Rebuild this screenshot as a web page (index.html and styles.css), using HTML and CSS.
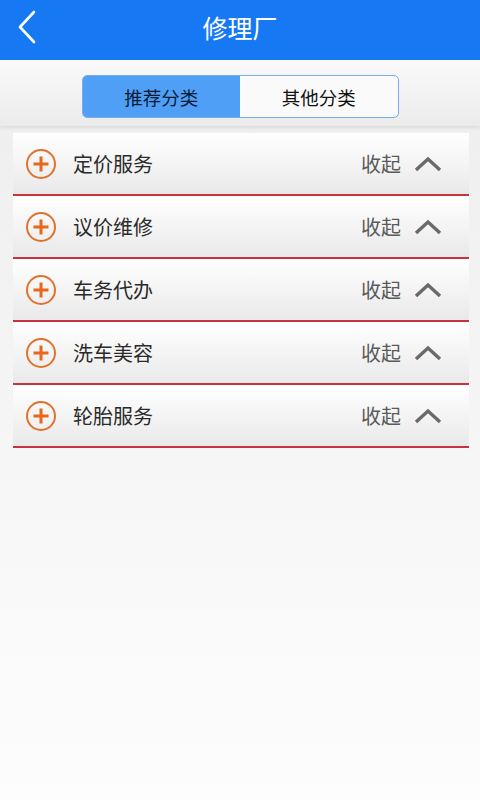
FILE: index.html
```html
<!DOCTYPE html>
<html lang="zh">
<head>
  <meta charset="UTF-8" />
  <meta name="viewport" content="width=device-width, initial-scale=1.0"/>
  <title>修理厂</title>
  <link rel="stylesheet" href="styles.css">
</head>
<body>
  <div class="top-bar">
    <div class="back-button">
      <svg width="22" height="34" viewBox="0 0 22 34">
        <path d="M18 2 L4 17 L18 32" fill="none" stroke="#fff" stroke-width="2.6" stroke-linecap="round" stroke-linejoin="round"/>
      </svg>
    </div>
    <div class="title">修理厂</div>
  </div>

  <div class="tab-area">
    <div class="tabs">
      <div class="tab active">推荐分类</div>
      <div class="tab">其他分类</div>
    </div>
  </div>

  <div class="category-list">
    <div class="category-row">
      <svg class="plus-icon" width="32" height="32" viewBox="0 0 32 32">
        <circle cx="16" cy="16" r="14" fill="none" stroke="#e2722b" stroke-width="2"/>
        <path d="M16 8.5 V23.5 M8.5 16 H23.5" stroke="#e8671a" stroke-width="3"/>
      </svg>
      <span class="category-name">定价服务</span>
      <span class="toggle-text">收起</span>
      <svg class="up-icon" width="30" height="18" viewBox="0 0 30 18">
        <path d="M3 15 L15 4 L27 15" fill="none" stroke="#6a6a6a" stroke-width="3.4"/>
      </svg>
    </div>
    <div class="category-row">
      <svg class="plus-icon" width="32" height="32" viewBox="0 0 32 32">
        <circle cx="16" cy="16" r="14" fill="none" stroke="#e2722b" stroke-width="2"/>
        <path d="M16 8.5 V23.5 M8.5 16 H23.5" stroke="#e8671a" stroke-width="3"/>
      </svg>
      <span class="category-name">议价维修</span>
      <span class="toggle-text">收起</span>
      <svg class="up-icon" width="30" height="18" viewBox="0 0 30 18">
        <path d="M3 15 L15 4 L27 15" fill="none" stroke="#6a6a6a" stroke-width="3.4"/>
      </svg>
    </div>
    <div class="category-row">
      <svg class="plus-icon" width="32" height="32" viewBox="0 0 32 32">
        <circle cx="16" cy="16" r="14" fill="none" stroke="#e2722b" stroke-width="2"/>
        <path d="M16 8.5 V23.5 M8.5 16 H23.5" stroke="#e8671a" stroke-width="3"/>
      </svg>
      <span class="category-name">车务代办</span>
      <span class="toggle-text">收起</span>
      <svg class="up-icon" width="30" height="18" viewBox="0 0 30 18">
        <path d="M3 15 L15 4 L27 15" fill="none" stroke="#6a6a6a" stroke-width="3.4"/>
      </svg>
    </div>
    <div class="category-row">
      <svg class="plus-icon" width="32" height="32" viewBox="0 0 32 32">
        <circle cx="16" cy="16" r="14" fill="none" stroke="#e2722b" stroke-width="2"/>
        <path d="M16 8.5 V23.5 M8.5 16 H23.5" stroke="#e8671a" stroke-width="3"/>
      </svg>
      <span class="category-name">洗车美容</span>
      <span class="toggle-text">收起</span>
      <svg class="up-icon" width="30" height="18" viewBox="0 0 30 18">
        <path d="M3 15 L15 4 L27 15" fill="none" stroke="#6a6a6a" stroke-width="3.4"/>
      </svg>
    </div>
    <div class="category-row">
      <svg class="plus-icon" width="32" height="32" viewBox="0 0 32 32">
        <circle cx="16" cy="16" r="14" fill="none" stroke="#e2722b" stroke-width="2"/>
        <path d="M16 8.5 V23.5 M8.5 16 H23.5" stroke="#e8671a" stroke-width="3"/>
      </svg>
      <span class="category-name">轮胎服务</span>
      <span class="toggle-text">收起</span>
      <svg class="up-icon" width="30" height="18" viewBox="0 0 30 18">
        <path d="M3 15 L15 4 L27 15" fill="none" stroke="#6a6a6a" stroke-width="3.4"/>
      </svg>
    </div>
  </div>
</body>
</html>
```

FILE: styles.css
```css
body {
  margin: 0;
  padding: 0;
  width: 480px;
  height: 800px;
  overflow: hidden;
  font-family: "Noto Sans CJK SC", "Noto Sans", sans-serif;
  background: linear-gradient(to bottom, #efefef 130px, #f6f6f6 450px, #fdfdfd 800px);
}

.top-bar {
  height: 60px;
  background-color: #1679f3;
  display: flex;
  align-items: center;
  justify-content: center;
  position: relative;
}

.back-button {
  position: absolute;
  left: 16px;
  top: 10px;
  width: 22px;
  height: 34px;
}

.title {
  color: #fff;
  font-size: 25px;
  line-height: 1;
  margin-top: -6px;
}

.tab-area {
  height: 66px;
  background: linear-gradient(to bottom, #fafafa, #ebebeb);
  display: flex;
  justify-content: center;
  padding-top: 15px;
  box-sizing: border-box;
  box-shadow: 0 2px 3px rgba(0, 0, 0, 0.08);
}

.tabs {
  display: flex;
  width: 317px;
  height: 43px;
  border: 1px solid #74aef0;
  border-radius: 5px;
  overflow: hidden;
  box-sizing: border-box;
  background-color: #fafafa;
}

.tab {
  flex: 1;
  display: flex;
  align-items: center;
  justify-content: center;
  font-size: 18.5px;
  color: #111;
}

.tab.active {
  background-color: #4f9ff6;
  color: #0b1a33;
}

.category-list {
  margin: 7px 11px 0 13px;
}

.category-row {
  height: 61px;
  border-bottom: 2px solid #c9323c;
  background: linear-gradient(to bottom, #ffffff, #e9e9e9);
  display: flex;
  align-items: center;
  padding: 0 26px 0 12px;
}

.plus-icon {
  flex-shrink: 0;
}

.category-name {
  margin-left: 16px;
  font-size: 20px;
  color: #2a2a2a;
  flex: 1;
}

.toggle-text {
  font-size: 20px;
  color: #5a5a5a;
  margin-right: 12px;
}

.up-icon {
  flex-shrink: 0;
}
```
